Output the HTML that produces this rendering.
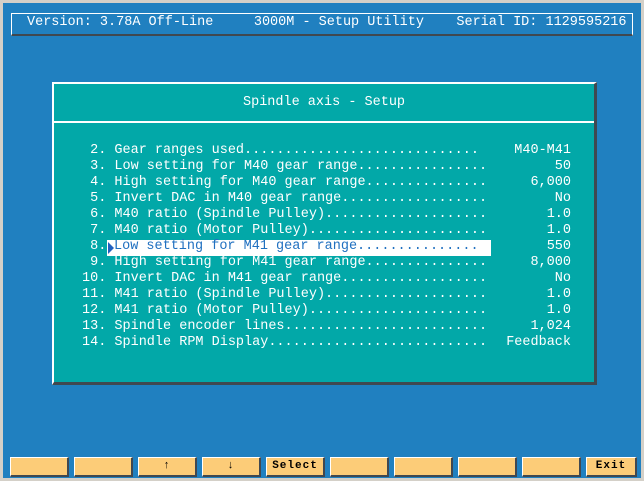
<!DOCTYPE html>
<html><head><style>
body{margin:0;width:644px;height:481px;background:#d4d0c8;position:relative;overflow:hidden;font-family:"Liberation Mono",monospace;}
#scr{position:absolute;left:3px;top:3px;width:638px;height:475px;background:#2080c0;}
.hdr{position:absolute;left:11px;top:13px;width:620px;height:20px;border-left:1px solid #fff;border-top:1px solid #fff;border-bottom:2px solid #404850;border-right:1px solid #fff;}
.t{position:absolute;color:#fff;font-size:13.5px;white-space:pre;line-height:16px;}
#dlg{position:absolute;left:52px;top:82px;width:540px;height:298px;background:#02a8a8;border:2px solid #fff;border-right:3px solid #404850;border-bottom:3px solid #404850;box-sizing:content-box;}
.line{position:absolute;left:0;top:37px;width:540px;height:2px;background:#fff;}
.b{position:absolute;top:457px;width:56px;height:17px;background:#fccc78;border-top:1px solid #fff;border-left:1px solid #fff;border-right:2px solid #404850;border-bottom:2px solid #404850;font-weight:bold;font-size:11px;text-align:center;line-height:17px;color:#000;letter-spacing:1px;}
.hl{position:absolute;left:107px;top:240px;width:384px;height:16px;background:#fff;}
</style></head><body>
<div id="scr"></div>
<div class="hdr"></div>
<div class="t" style="left:27px;top:15px">Version: 3.78A Off-Line     3000M - Setup Utility    Serial ID: 1129595216</div>
<div id="dlg"><div class="line"></div></div>
<div class="t" style="left:243px;top:95px">Spindle axis - Setup</div>
<div class="hl"></div>
<svg style="position:absolute;left:108px;top:242px" width="8" height="12"><polygon points="0,0 6,6 0,12" fill="#2060c0"/></svg>
<div class="t" style="left:82px;top:143px"> 2. Gear ranges used.............................
 3. Low setting for M40 gear range................
 4. High setting for M40 gear range...............
 5. Invert DAC in M40 gear range..................
 6. M40 ratio (Spindle Pulley)....................
 7. M40 ratio (Motor Pulley)......................
 8.
 9. High setting for M41 gear range...............
10. Invert DAC in M41 gear range..................
11. M41 ratio (Spindle Pulley)....................
12. M41 ratio (Motor Pulley)......................
13. Spindle encoder lines.........................
14. Spindle RPM Display...........................</div>
<div class="t" style="left:114px;top:239px;color:#2070c0">Low setting for M41 gear range...............</div>
<div class="t" style="left:480px;top:143px;width:91px;text-align:right">M40-M41
50
6,000
No
1.0
1.0
550
8,000
No
1.0
1.0
1,024
Feedback</div>
<div class="b" style="left:10px"></div>
<div class="b" style="left:74px"></div>
<div class="b" style="left:138px">↑</div>
<div class="b" style="left:202px">↓</div>
<div class="b" style="left:266px">Select</div>
<div class="b" style="left:330px"></div>
<div class="b" style="left:394px"></div>
<div class="b" style="left:458px"></div>
<div class="b" style="left:522px"></div>
<div class="b" style="left:586px;width:48px">Exit</div>
</body></html>
